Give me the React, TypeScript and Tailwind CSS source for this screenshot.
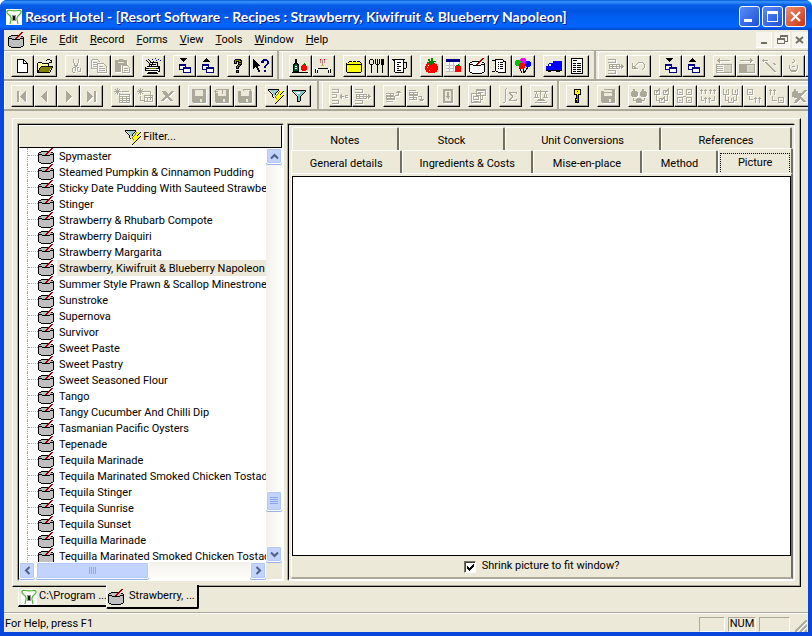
import React from 'react'
import clsx from 'clsx'

type Tool = {
  name: string
  icon: React.ReactNode
  disabled?: boolean
}

const recipes = [
  'Spymaster',
  'Steamed Pumpkin & Cinnamon Pudding',
  'Sticky Date Pudding With Sauteed Strawberries',
  'Stinger',
  'Strawberry & Rhubarb Compote',
  'Strawberry Daiquiri',
  'Strawberry Margarita',
  'Strawberry, Kiwifruit & Blueberry Napoleon',
  'Summer Style Prawn & Scallop Minestrone Soup',
  'Sunstroke',
  'Supernova',
  'Survivor',
  'Sweet Paste',
  'Sweet Pastry',
  'Sweet Seasoned Flour',
  'Tango',
  'Tangy Cucumber And Chilli Dip',
  'Tasmanian Pacific Oysters',
  'Tepenade',
  'Tequila Marinade',
  'Tequila Marinated Smoked Chicken Tostadas',
  'Tequila Stinger',
  'Tequila Sunrise',
  'Tequila Sunset',
  'Tequilla Marinade',
  'Tequilla Marinated Smoked Chicken Tostadas',
]

const menus = ['File', 'Edit', 'Record', 'Forms', 'View', 'Tools', 'Window', 'Help']

function Svg({ children, className }: { children: React.ReactNode; className?: string }) {
  return (
    <svg
      viewBox="0 0 16 16"
      width="16"
      height="16"
      fill="none"
      stroke="currentColor"
      shapeRendering="crispEdges"
      className={clsx('shrink-0', className)}
      aria-hidden="true"
    >
      {children}
    </svg>
  )
}

function PotIcon({ fill = '#c0c0c0' }: { fill?: string }) {
  return (
    <Svg>
      <path d="M3 4h10v1h2v9h-2v1H3v-1H1V5h2z" fill={fill} stroke="none" />
      <path d="M3 3.500h8M1 4.500h2M13 4.500h2M.5 5v9M15.500 5v9M1 6.500h3M12 6.500h3M4 7.500h8M1 14.500h2M13 14.500h2M3 15.500h10" />
      <path d="M13 .5h2M12 1.500h2M11 2.500h2M10 3.500h2M9 4.500h2M8 5.500h2M7 6.500h2" stroke="#a00000" />
    </Svg>
  )
}

function LogoIcon() {
  return (
    <Svg>
      <path d="M0 0h16v16H0z" fill="#fff" stroke="none" />
      <path
        d="M2.500 5.500C-.5 3 1 1 4 1.500s5 .5 8 0 4.500 1.500 1.500 4c-1.500 1-3 2.500-2.500 5l1 4.500M2.500 5.500c2 1 3 2.500 2.500 5L4 15"
        stroke="#4ab52e"
        strokeWidth="1.200"
        shapeRendering="auto"
      />
      <path d="M6 6h4v6H6z" fill="#999" stroke="none" />
      <path d="M7 7h2v4H7z" fill="#111" stroke="none" />
    </Svg>
  )
}

function FilterIcon({ bolt }: { bolt?: boolean }) {
  return (
    <Svg>
      {bolt ? (
        <>
          <path d="M1 2h9L7 5v4L5 7V5z" fill="#9cc" stroke="none" />
          <path d="M0 1.500h11M.5 2v1M1.500 3v1M2.500 4v1M3.500 5v1M4.500 6v3M5.500 9v1M10.500 2v1M9.500 3v1M8.500 4v1M7.500 5v2" />
          <path d="M12 3h3l-3 4h3l-8 8 2-5H7z" fill="#ff0" stroke="none" />
          <path d="M15.500 3v1M14.500 4v1M13.500 5v1M12.500 6v1M15.500 7v1M14.500 8v1M13.500 9v1M12.500 10v1M11.500 11v1M10.500 12v1M9.500 13v1M8.500 14v1M7 15.500h1" />
          <path d="M11.500 3v1M10.500 4v2M9.500 6v1M8.500 7v1M7.500 8v2M8 10.500h1" stroke="#808000" />
        </>
      ) : (
        <>
          <path d="M2 3h12l-4 5v5H7V8z" fill="#7cc8c8" stroke="none" />
          <path d="M1 2.500h14M1.500 3v1M14.500 3v1M2.500 4v1M13.500 4v1M3.500 5v1M12.500 5v1M4.500 6v1M11.500 6v1M5.500 7v1M10.500 7v1M6.500 8v6M9.500 8v5M7 13.500h2" />
          <path d="M5 4.500h4M6 5.500h3" stroke="#fff" />
        </>
      )}
    </Svg>
  )
}

const Tree = ({ up }: { up?: boolean }) => (
  <Svg>
    {up ? <path d="M7 0h1v1h1v1h1v1h1v1H4V3h1V2h1V1h1z" fill="#000" stroke="none" /> : <path d="M4 0h7v1h-1v1H9v1H8v1H7V3H6V2H5V1H4z" fill="#000" stroke="none" />}
    <g stroke="#000080">
      <path d="M3.500 6.500h6v5h-6zM3 7.500h7" fill="#fff" />
      <path d="M7.500 9.500h7v5h-7zM7 10.500h8" fill="#fff" />
    </g>
  </Svg>
)

const Disk = ({ children }: { children?: React.ReactNode }) => (
  <Svg>
    <path d="M1 1h14v14H2l-1-1z" fill="currentColor" stroke="none" />
    <path d="M4 2h8v6H4zM9 11h2v3H9z" fill="#ece9d8" stroke="none" />
    {children}
  </Svg>
)

const Grid = ({ twice }: { twice?: boolean }) => (
  <Svg>
    <path d="M0 3.500h7M3.500 0v7M1 1l5 5M6 1L1 6" />
    {twice ? (
      <>
        <path d="M6 3.500h8M13.500 4v8M3.500 8v5M4 12.500h3" />
        <path d="M7.500 7.500h8v6h-8zM7 9.500h8M10.500 9v5" />
      </>
    ) : (
      <path d="M8 3.500h7M5.500 6.500h10v8h-10zM5 8.500h11M5 10.500h11M5 12.500h11M8.500 8v7M12.500 8v7" />
    )}
  </Svg>
)

/* rows of a table with an arrow that moves one of them */
const Rows = ({ kind }: { kind: 'in' | 'out' | 'up' | 'down' }) => (
  <Svg>
    {kind === 'in' && <path d="M0 1.500h6v3H0M0 6.500h4v3H0M0 12.500h6v3H0M8 8.500h4M8.500 7v3M9.500 6v5M13 7.500h3v2h-3z" />}
    {kind === 'out' && <path d="M0 1.500h7v3H0M1.500 6.500h10v4h-10zM1 8.500h15M0 12.500h7v3H0M4.500 6v5M8.500 6v5M14.500 7v3M13.500 6v5" />}
    {kind === 'up' && <path d="M0 5.500h7v2H0M.5 8.500h8v3h-8zM0 10.500h9M0 13.500h7M9 7.500h3.500V3M10 4.500h5M11 3.500h3M4.500 5v7" />}
    {kind === 'down' && <path d="M0 2.500h7M.5 4.500h8v3h-8zM0 6.500h9M0 9.500h7v2H0M9 8.500h3.500V13M10 11.500h5M11 12.500h3M4.500 4v7" />}
  </Svg>
)

const Move = ({ right }: { right?: boolean }) => (
  <Svg>
    <path d="M1 2.500h13" />
    {right ? <path d="M12.500 1v3M11.500 0v5" /> : <path d="M2.500 1v3M3.500 0v5" />}
    <path d="M.5 6.500h15v8H.5z" />
    <path d="M8 7h7v7H8z" fill="currentColor" fillOpacity=".45" stroke="none" />
    {right ? <path d="M1 7h7v7H1z" fill="currentColor" stroke="none" /> : <path d="M1 8.500h6M1 10.500h6M1 12.500h6" />}
  </Svg>
)

/* small blossoms linked by stems */
const Links = ({ kind }: { kind: number }) => (
  <Svg>
    {kind === 0 && (
      <g fill="currentColor" stroke="none">
        <path d="M1 3h1V1h2v2h2v1h1v4H6v1H1V8H0V4h1zM10 3h1V1h2v2h2v1h1v4h-1v1h-5V8H9V4h1zM5 11h1v-1h4v1h1v4H5z" />
        <path d="M2 10h1v2h2v1H2zM13 10h1v3h-3v-1h2z" />
      </g>
    )}
    {kind === 1 && <path d="M.5 2.500h5v4h-5zM2 4.500l4-4M9.500 2.500h5v4h-5zM11 4.500l4-4M5.500 10.500h5v4h-5zM7 12.500l4-4M2.500 7v5H5M13.500 7v5H11" />}
    {kind === 2 && <path d="M.5 1.500h5v5h-5zM2 4.500h2M9.500 1.500h5v5h-5zM11 4.500h2M.5 9.500h5v5h-5zM2 12.500h2M9.500 9.500h5v5h-5zM11 12.500h2M6 8.500h3" />}
    {kind === 3 && <path d="M1.500 1v5M0 2.500h3M5.500 1v5M4 2.500h3M10.500 1v5M9 2.500h3M14.500 1v5M13 2.500h3M5.500 9v6M4 10.500h3M9.500 9v6M8 10.500h3M1.500 8v4H4M14.500 8v4H11" />}
    {kind === 4 && <path d="M.5 1v5h5V1M3.500 2v3M9.500 1v5h5V1M12.500 2v3M5.500 9v5h5V9M8.500 10v3M2.500 7v5H5M13.500 7v5H11" />}
    {kind === 5 && <path d="M1.500 1.500h5v5h-5zM3 4.500h2M3.500 8v3H7M9.500 9v6M8 10.500h3M13.500 9v6M12 10.500h3" />}
    {kind === 6 && <path d="M1.500 1v6M0 2.500h3M5.500 1v6M4 2.500h3M3.500 8v4H8M9.500 9.500h5v5h-5zM11 12.500h2" />}
    {kind === 7 && <path d="M1 3h1V1h2v2h2v2h3l3-3h3L9 9l6 5h-3l-4-3-3 4H2l3-5H2V9H0V4h1z" fill="currentColor" stroke="none" />}
  </Svg>
)

const standard: Tool[][] = [
  [
    { name: 'New', icon: <Svg><path d="M3.500 1.500h6l4 4v9h-10z" fill="#fff" /><path d="M9.500 2v3.500H13" /></Svg> },
    {
      name: 'Open',
      icon: (
        <Svg>
          <path d="M1 5h4l1 1h6v8H1z" fill="#ff9" stroke="none" />
          <path d="M1 14l3-5h11l-3 5z" fill="#808000" stroke="none" />
          <path d="M1 4.500h4M.5 5v10M5 5.500h7M11.500 6v3M4 8.500h12M3.500 9v1M2.500 10v2M1.500 12v2M0 14.500h13M15.500 9v1M14.500 10v2M13.500 12v2M9 2.500h1M10 1.500h3M13 2.500h1M14.500 2v3M12 4.500h3" />
        </Svg>
      ),
    },
  ],
  [
    { name: 'Cut', disabled: true, icon: <Svg><path d="M5.500 1v4M6.500 5v3M7.500 7v2M10.500 1v4M9.500 5v3M8.500 7v2M5 9.500h3M4.500 10v4M7.500 10v3M5 14.500h2M9 9.500h2M9.500 10v3M12.500 10v4M10 13.500h2" /></Svg> },
    {
      name: 'Copy',
      disabled: true,
      icon: <Svg><path d="M.5 1.500h6l3 3M.5 1.500v9h5M2 4.500h4M2 6.500h4M2 8.500h4M6.500 5.500h6l3 3v6h-9zM8 8.500h4M8 10.500h6M8 12.500h6" /></Svg>,
    },
    {
      name: 'Paste',
      disabled: true,
      icon: (
        <Svg>
          <path d="M1 2h4V1h4v1h4v5H7v7H1z" fill="currentColor" stroke="none" />
          <path d="M4 4.500h6" stroke="#ece9d8" />
          <path d="M8.500 7.500h5l2 2v5h-7zM10 10.500h4M10 12.500h4" />
        </Svg>
      ),
    },
  ],
  [
    {
      name: 'Print',
      icon: (
        <Svg>
          <path d="M2 8h12v6H2z" fill="#fff" stroke="none" />
          <path d="M5 4.500h8M4.500 5v3M12.500 5v3M6 6.500h5M2 8.500h12M.5 9v4M1 10.500h13M14.500 8v5M1 12.500h12M3 14.500h9M13 13.500h2M2 15.500h11M1 2l6 6M3 1l5 5M13 9.500h2" />
          <path d="M4 10.500h7" stroke="#808000" />
          <path d="M7 1.500h1M10 .5h1M13 1.500h1M11 2.500h1M15 2.500h1M8 3.500h1" stroke="#0000c0" />
        </Svg>
      ),
    },
  ],
  [
    { name: 'Expand', icon: <Tree /> },
    { name: 'Collapse', icon: <Tree up /> },
  ],
  [
    {
      name: 'Help',
      icon: (
        <Svg>
          <path d="M4 2h1V1h6v1h1v5h-1v1h-1v1H9v2H6V8h1V7h1V4H7v2H4zM6 12h3v3H6z" fill="#000" stroke="none" />
          <path d="M5 2.500h5M5.500 3v2M9 3.500h2M9 5.500h2M8 7.500h2M7.500 8v2M7.500 13v1" stroke="#808000" />
        </Svg>
      ),
    },
    {
      name: 'Context help',
      icon: (
        <Svg>
          <path d="M0 1h1v1h1v1h1v1h1v1h1v1h1v1h1v1H5v2h1v2h1v2H5v-2H4v-2H3v-1H2v1H1v1H0z" fill="#000" stroke="none" />
          <path d="M8 3h1V2h1V1h4v1h1v1h1v3h-1v1h-1v1h-1v2h-2V8h1V7h1V6h1V3h-3v2H8zM11 12h2v2h-2z" fill="#000080" stroke="none" />
        </Svg>
      ),
    },
  ],
]

const stock: Tool[][] = [
  [
    {
      name: 'Beverages',
      icon: (
        <Svg>
          <path d="M3.500 1.500h1v4h1v1h1v7h-5v-7h1v-1h1z" fill="#006030" stroke="#000" />
          <path d="M3 8.500h2M3 10.500h2" stroke="#fff" />
          <circle cx="12" cy="10" r="3" fill="#f00" stroke="none" />
          <path d="M11 6.500h3M12.500 5v2" stroke="#008000" />
          <path d="M0 14.500h16" />
        </Svg>
      ),
    },
    {
      name: 'Table',
      icon: (
        <Svg>
          <path d="M0 10h16v4h-3v-3H3v3H0z" fill="#fff" stroke="none" />
          <path d="M3 10.500h10M.5 11v4M15.500 11v4M2.500 12v3M13.500 12v3" />
          <path d="M5.500 2v3M7.500 2v5M9.500 2v3" stroke="#c08080" />
          <path d="M5 1.500h1M9 1.500h1" stroke="#f00" />
          <path d="M6 7.500h3" stroke="#cc0" />
        </Svg>
      ),
    },
  ],
  [
    {
      name: 'Ingredients',
      icon: (
        <Svg>
          <path d="M1 6l2-2h11l2 2v8H1z" fill="#ff0" stroke="none" />
          <path d="M3 3.500h3M7 3.500h3M11 3.500h3M2 4.500h1M14 4.500h1M1 6.500h14M.5 5v9M15.500 5v9M1 14.500h14" />
        </Svg>
      ),
    },
    {
      name: 'Utensils',
      icon: <Svg><path d="M1 1.500h3M.5 2v4M4.500 2v4M1 6.500h3M2.500 7v8M6.500 1v5M8.500 1v14M10.500 1v5M7 6.500h3M12.500 1v6M13.500 1v14M14.500 1v6" /></Svg>,
    },
    {
      name: 'Measures',
      icon: <Svg><path d="M3 2h8v12H3z" fill="#fff" stroke="none" /><path d="M0 1.500h13M1 2.500h2M2.500 3v11M11.500 2v12M3 14.500h9M5 4.500h4M5 6.500h2M5 8.500h4M5 10.500h2M5 12.500h4M12 4.500h3M14.500 5v5M12 10.500h2" /></Svg>,
    },
  ],
  [
    {
      name: 'Produce',
      icon: (
        <Svg>
          <path d="M4 5h8v1h2v2h1v4h-1v2h-2v1H5v-1H3v-2H2V8h1V6h1z" fill="#f00" stroke="none" />
          <path d="M5 1h2v2h1V0h2v3h3v1h-2v2H9V5H8v2H6V5H4V4h2V3H5z" fill="#008000" stroke="none" />
          <path d="M4 9.500h1M5 7.500h1M6 12.500h1" stroke="#fff" />
        </Svg>
      ),
    },
    {
      name: 'Stock calendar',
      icon: (
        <Svg>
          <path d="M0 1h14v13H0z" fill="#fff" stroke="none" />
          <path d="M0 1h14v3H0z" fill="#000080" stroke="none" />
          <path d="M0 7.500h9M0 10.500h8M0 13.500h14M3.500 4v10M7.500 4v10M13.500 4v10" stroke="#c0c0c0" />
          <circle cx="12" cy="11" r="3.500" fill="#f00" stroke="none" />
          <path d="M10 7.500h4M12.500 6v2" stroke="#008000" />
        </Svg>
      ),
    },
    { name: 'Recipes', icon: <PotIcon fill="#fff" /> },
    {
      name: 'Menus',
      icon: <Svg><path d="M4 2h8v12H4z" fill="#fff" stroke="none" /><path d="M0 2.500h3M0 13.500h3M3.500 1v12M4 1.500h7M11.500 2v2M12 3.500h2M13.500 4v10M4 13.500h2M6 14.500h8M6 4.500h1M8 4.500h3M6 6.500h1M8 6.500h3M6 8.500h1M8 8.500h3M6 10.500h1M8 10.500h3" /></Svg>,
    },
    {
      name: 'Functions',
      icon: (
        <Svg>
          <path d="M4 9l3 6M8 9v6M13 9l-4 6" />
          <circle cx="8" cy="3" r="3" fill="#f0f" stroke="none" />
          <circle cx="3" cy="5" r="3" fill="#00c000" stroke="none" />
          <circle cx="13" cy="6" r="3" fill="#00f" stroke="none" />
          <circle cx="7" cy="8" r="3" fill="#f00" stroke="none" />
        </Svg>
      ),
    },
  ],
  [
    {
      name: 'Suppliers',
      icon: (
        <Svg>
          <path d="M7 3h9v9H7zM3 5h4v7H0V8h2z" fill="#00f" stroke="none" />
          <path d="M3 6h2v2H3z" fill="#fff" stroke="none" />
          <path d="M0 12h16v1H0zM2 13h3v1H2zM10 13h4v1h-4z" fill="#000" stroke="none" />
        </Svg>
      ),
    },
    {
      name: 'Reports',
      icon: <Svg><path d="M2.500.5h11v15h-11z" fill="#fff" /><path d="M4 2.500h4M4 5.500h3M8 5.500h4M4 7.500h3M8 7.500h4M4 9.500h3M8 9.500h4M4 11.500h3M8 11.500h4M4 13.500h3M8 13.500h4" /></Svg>,
    },
  ],
]

const arrange: Tool[][] = [
  [
    { name: 'Extract', disabled: true, icon: <Rows kind="out" /> },
    { name: 'Undo', disabled: true, icon: <Svg><path d="M1.500 5v6M2 10.500h5M2 8.500h2M4 7.500h1M5 6.500h1M6 5.500h1M7 4.500h5M12.500 5v1M13.500 6v4M12.500 10v1M11 11.500h1M3 9.500h2" /></Svg> },
  ],
  [
    { name: 'Expand all', icon: <Tree /> },
    { name: 'Collapse all', icon: <Tree up /> },
  ],
  [
    { name: 'Move left', disabled: true, icon: <Move /> },
    { name: 'Move right', disabled: true, icon: <Move right /> },
    { name: 'Link', disabled: true, icon: <Svg><path d="M0 2.500h6M1.500 1v3M3 4l10 10M4 4l10 10M11 5l2 2M12 5l2 2" /></Svg> },
    { name: 'Rotate', disabled: true, icon: <Svg><path d="M8 1.500h1M9.500 2v2M7 4.500h2M4.500 7v4M5.500 11v2M6 13.500h5M11.500 11v2M12.500 7v4M6 12.500h5M7 8.500h3" /></Svg> },
    { name: 'More', disabled: true, icon: <Move /> },
  ],
]

const record: Tool[][] = [
  [
    { name: 'First', disabled: true, icon: <Svg><path d="M3 3h2v11H3zM12 3v11L6 8.500z" fill="currentColor" stroke="none" /></Svg> },
    { name: 'Previous', disabled: true, icon: <Svg><path d="M10 3v11L4 8.500z" fill="currentColor" stroke="none" /></Svg> },
    { name: 'Next', disabled: true, icon: <Svg><path d="M6 3v11l6-5.500z" fill="currentColor" stroke="none" /></Svg> },
    { name: 'Last', disabled: true, icon: <Svg><path d="M11 3h2v11h-2zM4 3v11l6-5.500z" fill="currentColor" stroke="none" /></Svg> },
  ],
  [
    { name: 'Add record', disabled: true, icon: <Grid /> },
    { name: 'Duplicate record', disabled: true, icon: <Grid twice /> },
    { name: 'Delete record', disabled: true, icon: <Svg><path d="M2 3h3l3 3 4-3h2L9 8l4 5h-3L7 9l-4 4H1l4-5z" fill="currentColor" stroke="none" /></Svg> },
  ],
  [
    { name: 'Save', disabled: true, icon: <Disk /> },
    { name: 'Revert', disabled: true, icon: <Disk><path d="M0 0h9v5H0z" fill="#ece9d8" stroke="none" /><path d="M0 3.500h4M1.500 2v3M2 1.500h7M8.500 2v4" /></Disk> },
    { name: 'Save all', disabled: true, icon: <Disk><path d="M0 0h16v3H0z" fill="#ece9d8" stroke="none" /><path d="M6 1.500h8M13.500 1v3M6.500 1v2" /></Disk> },
  ],
  [
    { name: 'Quick filter', icon: <FilterIcon bolt /> },
    { name: 'Filter', icon: <FilterIcon /> },
  ],
]

const rows: Tool[][] = [
  [
    { name: 'Insert row', disabled: true, icon: <Rows kind="in" /> },
    { name: 'Remove row', disabled: true, icon: <Rows kind="out" /> },
  ],
  [
    { name: 'Row up', disabled: true, icon: <Rows kind="up" /> },
    { name: 'Row down', disabled: true, icon: <Rows kind="down" /> },
  ],
  [{ name: 'Drill down', disabled: true, icon: <Svg><path d="M3 1h10v14H3z" fill="currentColor" stroke="none" /><path d="M5 3h6v10H5z" fill="#ece9d8" stroke="none" /><path d="M8 4v7M7 4v4M6 8.500h4M7 9.500h2" /></Svg> }],
  [{ name: 'Copy to', disabled: true, icon: <Svg><path d="M5.500 1.500h9v6h-9zM5 2.500h10M.5 5.500h9v9h-9zM2 8.500h5v3H2zM11 8v3H9M3 13.500h5M7 4.500h5" /></Svg> }],
  [{ name: 'Totals', disabled: true, icon: <Svg><path d="M3.500 1v13M4 .5h1M1 14.500h2M7 4.500h8M7 5.500h2M8 6.500h2M9 7.500h2M10 8.500h1M9 9.500h2M8 10.500h2M7 11.500h2M7 12.500h8M14.500 5v1M14.500 11v1" /></Svg> }],
  [{ name: 'Balance', disabled: true, icon: <Svg><path d="M1 3.500h14M7.500 2v9M3.500 4v2M2.500 6v3M4.500 6v3M1 9.500h5M12.500 4v2M11.500 6v3M13.500 6v3M10 9.500h5M5 11.500h6M2 14.500h12M4 12.500h8" /></Svg> }],
]

const linking: Tool[][] = [
  [
    {
      name: 'Security',
      icon: (
        <Svg>
          <path d="M5.500 1.500h6v5h-2v8h-3v-1h1v-1h-1v-2h1v-4h-2z" fill="#ff0" />
          <path d="M8 3.500h1" />
          <path d="M8.500 7v7" stroke="#808000" />
        </Svg>
      ),
    },
  ],
  [{ name: 'Save as', disabled: true, icon: <Disk><path d="M0 0h4v3H0z" fill="#ece9d8" stroke="none" /><path d="M5 8.500h6M4 4.500h8" /></Disk> }],
  [0, 1, 2, 3, 4, 5, 6, 7].map((kind) => ({ name: `Link type ${kind + 1}`, disabled: true, icon: <Links kind={kind} /> })),
]

function ToolBand({ groups, className }: { groups: Tool[][]; className?: string }) {
  return (
    <div className={clsx('flex shrink-0 gap-2 border-l border-white pt-[3px] pl-[6px]', className)}>
      {groups.map((group, i) => (
        <div key={i} className="flex">
          {group.map((tool) => (
            <button
              key={tool.name}
              type="button"
              aria-label={tool.name}
              disabled={tool.disabled}
              className={clsx(
                'flex h-[22px] w-[23px] items-center border-t border-r border-b border-l border-t-white border-r-black border-b-black border-l-white pl-[2px] shadow-[inset_-1px_-1px_#aca899]',
                tool.disabled ? 'text-[#aca899]' : 'text-black'
              )}
            >
              <span className={clsx(tool.disabled && 'drop-shadow-[1px_1px_0_#ffffff]')}>{tool.icon}</span>
            </button>
          ))}
        </div>
      ))}
    </div>
  )
}

function Divider() {
  return <div className="w-[5px] shrink-0 border-l-2 border-[#aca899]" />
}

function Arrow({ d }: { d: string }) {
  return (
    <svg viewBox="0 0 9 9" width="9" height="9" fill="none" stroke="#4d6185" strokeWidth="2" aria-hidden="true">
      <path d={d} />
    </svg>
  )
}

const scrollPart =
  'flex shrink-0 items-center justify-center rounded-[2px] border border-white bg-[#c2d3fd] shadow-[inset_0_0_0_1px_#b4c8f6,0_1px_#98b0e8]'

function RecipeTree() {
  return (
    <section className="flex w-[266px] shrink-0 flex-col border-t border-r-2 border-b-2 border-l border-t-black border-r-white border-b-white border-l-black shadow-[-1px_-1px_#aca899]">
      <button
        type="button"
        className="flex h-[23px] shrink-0 items-center justify-center gap-[2px] border-t border-r border-b border-l border-t-white border-r-black border-b-black border-l-white pt-px"
      >
        <FilterIcon bolt />
        Filter...
      </button>
      <div className="flex min-h-0 flex-1 bg-white">
        <ul className="min-w-0 flex-1 overflow-hidden">
          {recipes.map((name) => (
            <li key={name} className="flex h-4 items-center whitespace-nowrap">
              <span className="ml-2 h-4 w-[11px] shrink-0 border-l border-dotted border-[#aca899]">
                <span className="block h-2 border-b border-dotted border-[#aca899]" />
              </span>
              <PotIcon />
              <span
                className={clsx('ml-[3px] h-4 px-[2px] leading-[18px]', name.endsWith('Napoleon') && 'bg-[#ece9d8]')}
              >
                {name}
              </span>
            </li>
          ))}
        </ul>
        <div className="flex w-4 shrink-0 flex-col bg-[linear-gradient(90deg,#f3f1ec,#fefefb)]">
          <button type="button" aria-label="Scroll up" className={clsx(scrollPart, 'h-4')}>
            <Arrow d="M1 6.500l3.500-3.500L8 6.500" />
          </button>
          <div className="grow-[324]" />
          <div className={clsx(scrollPart, 'h-5')}>
            <svg viewBox="0 0 8 8" width="8" height="8" stroke="#8ba8ee" shapeRendering="crispEdges">
              <path d="M0 .5h8M0 2.500h8M0 4.500h8M0 6.500h8" />
            </svg>
          </div>
          <div className="grow-[35]" />
          <button type="button" aria-label="Scroll down" className={clsx(scrollPart, 'h-4')}>
            <Arrow d="M1 2.500l3.500 3.500L8 2.500" />
          </button>
        </div>
      </div>
      <div className="flex h-[17px] shrink-0 pr-4">
        <div className="flex flex-1 bg-[linear-gradient(#f3f1ec,#fefefb)]">
          <button type="button" aria-label="Scroll left" className={clsx(scrollPart, 'w-4')}>
            <Arrow d="M6.500 1L3 4.500 6.500 8" />
          </button>
          <div className={clsx(scrollPart, 'ml-px w-[113px]')}>
            <svg viewBox="0 0 8 8" width="8" height="8" stroke="#8ba8ee" shapeRendering="crispEdges">
              <path d="M.5 0v7M2.500 0v7M4.500 0v7M6.500 0v7" />
            </svg>
          </div>
          <button type="button" aria-label="Scroll right" className={clsx(scrollPart, 'ml-auto w-4')}>
            <Arrow d="M2.500 1L6 4.500 2.500 8" />
          </button>
        </div>
      </div>
    </section>
  )
}

const tab =
  'min-w-0 basis-0 rounded-t-[2px] border-t border-r-2 border-l border-t-white border-r-[#716f64] border-l-white pt-1 whitespace-nowrap'

function Details() {
  return (
    <section className="flex min-w-0 flex-1 flex-col border-t border-r border-b-2 border-l border-t-black border-r-white border-b-white border-l-black pt-[2px] pr-px pl-[2px] shadow-[-1px_-1px_#aca899]">
      <div role="tablist" className="shrink-0">
        <div className="flex h-[23px] px-px">
          <button type="button" role="tab" className={clsx(tab, 'grow-[106]')}>Notes</button>
          <button type="button" role="tab" className={clsx(tab, 'grow-[106]')}>Stock</button>
          <button type="button" role="tab" className={clsx(tab, 'grow-[156]')}>Unit Conversions</button>
          <button type="button" role="tab" className={clsx(tab, 'grow-[131]')}>References</button>
        </div>
        <div className="flex h-[23px]">
          <button type="button" role="tab" className={clsx(tab, 'grow-[112]')}>General details</button>
          <button type="button" role="tab" className={clsx(tab, 'grow-[132]')}>Ingredients &amp; Costs</button>
          <button type="button" role="tab" className={clsx(tab, 'grow-[109]')}>Mise-en-place</button>
          <button type="button" role="tab" className={clsx(tab, 'grow-[76]')}>Method</button>
          <button type="button" role="tab" aria-selected="true" className={clsx(tab, '-mt-[2px] grow-[72] bg-[#ece9d8] px-px')}>
            <span className="flex h-[21px] items-center justify-center border border-dotted border-black">Picture</span>
          </button>
        </div>
      </div>
      <div className="flex min-h-0 flex-1 flex-col border-t border-r-2 border-b-2 border-l border-t-white border-r-[#716f64] border-b-[#aca899] border-l-white pt-[2px]">
        <div className="flex-1 border border-black bg-white" />
        <label className="flex h-[21px] shrink-0 items-center justify-center gap-[6px]">
          <span className="relative flex">
            <input
              type="checkbox"
              defaultChecked
              className="peer h-3 w-3 appearance-none border border-t-[#716f64] border-r-white border-b-white border-l-[#716f64] bg-white shadow-[inset_1px_1px_#404040]"
            />
            <svg
              viewBox="0 0 12 12"
              className="pointer-events-none absolute inset-0 hidden h-3 w-3 peer-checked:block"
              shapeRendering="crispEdges"
            >
              <path d="M3 5h1v1h1v1h1V6h1V5h1V4h1V3h1v3H9v1H8v1H7v1H6v1H5V9H4V8H3z" />
            </svg>
          </span>
          Shrink picture to fit window?
        </label>
      </div>
    </section>
  )
}

const captionButton = 'flex h-[21px] w-[21px] items-center justify-center rounded-[3px] border border-white'
const mdiButton = 'flex h-4 w-4 items-center justify-center border-r border-b border-white bg-[#f6f4ec]'

export default function App() {
  return (
    <div className="flex h-screen flex-col overflow-hidden rounded-t-[7px] bg-[#0846dc] font-[Roboto,'Liberation_Sans',sans-serif] text-[11px] text-black">
      {/* Title bar */}
      <header className="flex h-[30px] shrink-0 items-center bg-[linear-gradient(#0058d8_0%,#3a95ff_6%,#0a5fe8_16%,#0054e0_35%,#0060f4_65%,#0066ff_88%,#0046c8_100%)] pt-[3px] pr-[6px] pl-[6px]">
        <LogoIcon />
        <h1 className="ml-[3px] min-w-0 flex-1 truncate font-[Lato,sans-serif] text-[14px] font-bold text-white [text-shadow:1px_1px_#0a1883]">
          Resort Hotel - [Resort Software - Recipes : Strawberry, Kiwifruit &amp; Blueberry Napoleon]
        </h1>
        <div className="flex gap-[2px]">
          <button type="button" aria-label="Minimize" className={clsx(captionButton, 'bg-[linear-gradient(135deg,#5a8cf4,#1c50d8)]')}>
            <svg viewBox="0 0 19 19" width="19" height="19"><path d="M4 12h8v3H4z" fill="#fff" /></svg>
          </button>
          <button type="button" aria-label="Maximize" className={clsx(captionButton, 'bg-[linear-gradient(135deg,#5a8cf4,#1c50d8)]')}>
            <svg viewBox="0 0 19 19" width="19" height="19"><path d="M4 4h11v11H4zM5 7v7h9V7z" fill="#fff" fillRule="evenodd" /></svg>
          </button>
          <button type="button" aria-label="Close" className={clsx(captionButton, 'bg-[linear-gradient(135deg,#ef8d70,#c83410)]')}>
            <svg viewBox="0 0 19 19" width="19" height="19" stroke="#fff" strokeWidth="2"><path d="M5 5l9 9M14 5l-9 9" /></svg>
          </button>
        </div>
      </header>

      <div className="mx-1 mb-1 flex min-h-0 flex-1 flex-col bg-[#ece9d8]">
        {/* Menu bar */}
        <nav className="flex h-5 shrink-0 items-center pl-1">
          <PotIcon />
          <div className="flex flex-1">
            {menus.map((menu) => (
              <button key={menu} type="button" className="px-[6px]">
                <span className="underline">{menu[0]}</span>
                {menu.slice(1)}
              </button>
            ))}
          </div>
          <div className="flex gap-[2px] text-[#716f64]">
            <button type="button" aria-label="Minimize document" className={mdiButton}>
              <svg viewBox="0 0 12 12" width="12" height="12"><path d="M3 8h6v2H3z" fill="currentColor" /></svg>
            </button>
            <button type="button" aria-label="Restore document" className={mdiButton}>
              <svg viewBox="0 0 12 12" width="12" height="12" fill="none" stroke="currentColor" shapeRendering="crispEdges">
                <path d="M4 4V1.500h7V7H9M4 2.500h7M1.500 4.500h7v5h-7zM1 5.500h8" />
              </svg>
            </button>
            <button type="button" aria-label="Close document" className={mdiButton}>
              <svg viewBox="0 0 12 12" width="12" height="12" stroke="currentColor" strokeWidth="2"><path d="M2 3l7 6M9 3L2 9" /></svg>
            </button>
          </div>
        </nav>

        {/* Toolbars */}
        <div className="flex h-[31px] shrink-0 overflow-hidden border-t border-b-2 border-[#aca899] shadow-[inset_0_1px_#ffffff]">
          <ToolBand groups={standard} className="mt-px w-[273px]" />
          <Divider />
          <ToolBand groups={stock} className="mt-px w-[312px]" />
          <Divider />
          <ToolBand groups={arrange} className="mt-px -ml-px" />
        </div>
        <div className="flex h-[30px] shrink-0 overflow-hidden border-b-2 border-[#aca899] shadow-[inset_0_1px_#ffffff]">
          <ToolBand groups={record} className="mt-px w-[313px]" />
          <Divider />
          <ToolBand groups={rows} className="mt-px w-[235px]" />
          <Divider />
          <ToolBand groups={linking} className="mt-px -ml-[3px]" />
        </div>

        {/* Document */}
        <main className="mt-[7px] mr-[7px] ml-2 flex min-h-0 flex-1 gap-1 border-t border-r border-b border-l border-t-white border-r-black border-b-black border-l-white p-[5px] shadow-[inset_-1px_-1px_#aca899]">
          <RecipeTree />
          <Details />
        </main>
        <div className="ml-[14px] flex h-[25px] shrink-0 items-start">
          <button type="button" className="flex h-5 w-[88px] items-center gap-[2px] border-b-2 border-l border-b-black border-l-white pt-px pl-[2px] whitespace-nowrap">
            <LogoIcon />
            C:\Program ...
          </button>
          <button
            type="button"
            className="relative -mt-[2px] flex h-6 w-[93px] items-center gap-[5px] rounded-b-[2px] border-r-2 border-b-2 border-l border-r-black border-b-black border-l-white bg-[#ece9d8] pt-px pl-[1px] whitespace-nowrap"
          >
            <PotIcon />
            Strawberry, ...
          </button>
        </div>

        {/* Status bar */}
        <footer className="flex h-5 shrink-0 items-stretch border-t border-[#aca899] pl-px shadow-[inset_0_1px_#ffffff]">
          <p className="flex flex-1 items-center pt-1">For Help, press F1</p>
          <div className="mt-1 flex gap-[3px] pr-[5px]">
            <span className="w-[26px] border border-t-[#aca899] border-r-white border-b-white border-l-[#aca899]" />
            <span className="flex w-7 items-center justify-center border border-t-[#aca899] border-r-white border-b-white border-l-[#aca899]">NUM</span>
            <span className="w-[31px] border border-t-[#aca899] border-r-white border-b-white border-l-[#aca899]" />
          </div>
          <svg viewBox="0 0 12 12" width="12" height="12" className="mr-px self-end" strokeWidth="2">
            <path d="M0 12L12 0M5 12l7-7M10 12l2-2" stroke="#aca899" />
            <path d="M2 12L12 2M7 12l5-5" stroke="#fff" strokeWidth="1" />
          </svg>
        </footer>
      </div>
    </div>
  )
}
